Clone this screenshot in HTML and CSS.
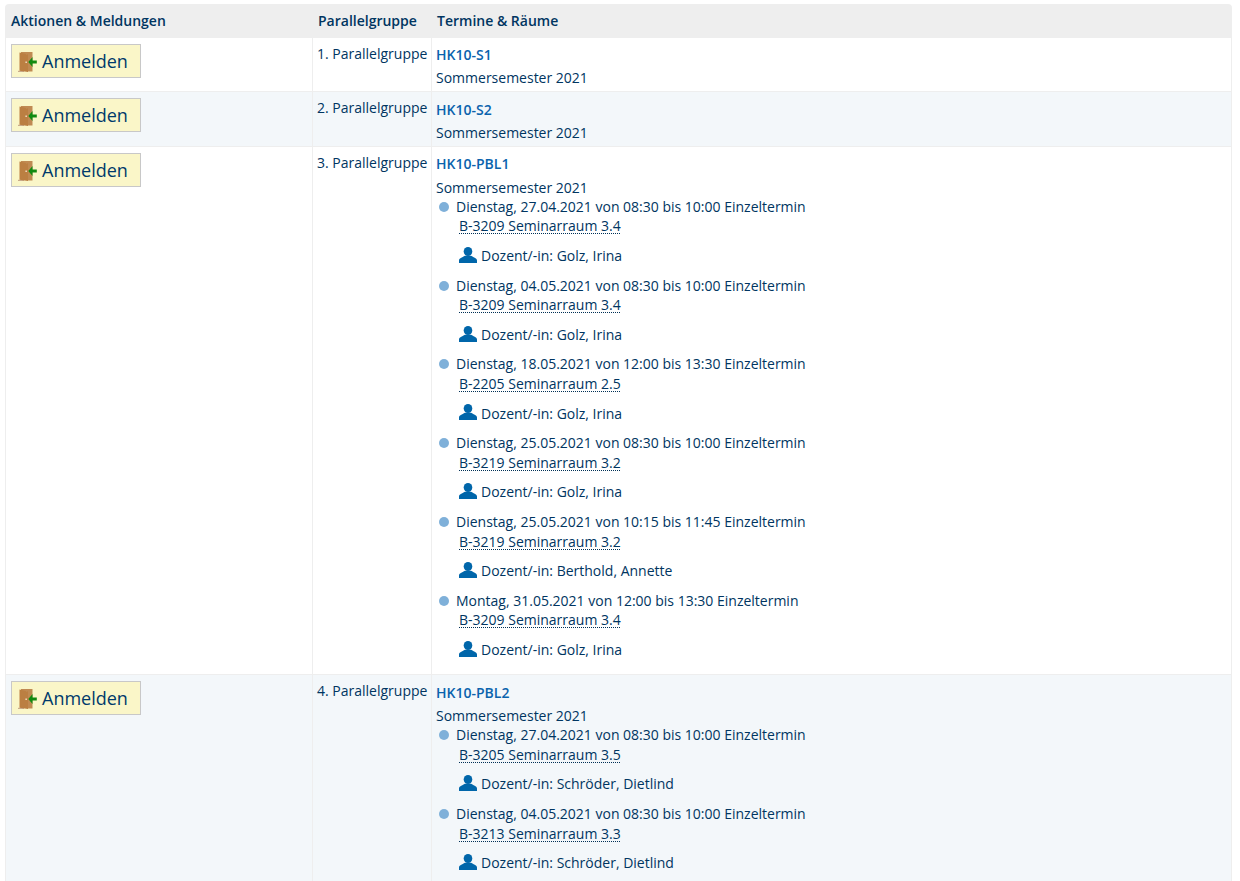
FILE: index.html
```html
<!DOCTYPE html>
<html lang="de">
<head>
<meta charset="utf-8">
<title>Parallelgruppen</title>
<link rel="stylesheet" href="styles.css">
</head>
<body>
<svg class="defs" width="0" height="0" aria-hidden="true">
  <symbol id="door" viewBox="0 0 20 20">
    <path d="M0 18.800h6V20H0z" fill="#c9ab8c"/>
    <path d="M3 0h11.500v19.500H9V2.500H3z" fill="#c08a52"/>
    <path d="M1.500 .5 10 2.500V20L1.500 18.800z" fill="#bb7f42"/>
    <rect x="7.500" y="9.500" width="1.300" height="1.500" fill="#f6ecd4"/>
    <path d="M18.800 8.500h-4.300V5l-4.200 5 4.200 5v-3.500h4.300z" fill="#118a11"/>
  </symbol>
  <symbol id="person" viewBox="0 0 18 16">
    <ellipse cx="9" cy="4.500" rx="4.300" ry="4.500" fill="#0066aa"/>
    <path d="M0 16v-2.500C0 11.500 3 10.500 6 8.800h6c3 1.700 6 2.700 6 4.700V16z" fill="#0066aa"/>
  </symbol>
</svg>
<main class="page">
<table class="groups">
  <thead>
    <tr><th class="c-act">Aktionen &amp; Meldungen</th><th class="c-par">Parallelgruppe</th><th>Termine &amp; Räume</th></tr>
  </thead>
  <tbody>
    <tr>
      <td><a class="signup"><svg class="ic-door"><use href="#door"/></svg>Anmelden</a></td>
      <td class="par">1. Parallelgruppe</td>
      <td class="dates"><a class="code">HK10-S1</a><div class="sem">Sommersemester 2021</div></td>
    </tr>
    <tr class="alt">
      <td><a class="signup"><svg class="ic-door"><use href="#door"/></svg>Anmelden</a></td>
      <td class="par">2. Parallelgruppe</td>
      <td class="dates"><a class="code">HK10-S2</a><div class="sem">Sommersemester 2021</div></td>
    </tr>
    <tr>
      <td><a class="signup"><svg class="ic-door"><use href="#door"/></svg>Anmelden</a></td>
      <td class="par">3. Parallelgruppe</td>
      <td class="dates"><a class="code">HK10-PBL1</a><div class="sem">Sommersemester 2021</div>
        <ul class="terms">
          <li><div class="when">Dienstag, 27.04.2021 von 08:30 bis 10:00 Einzeltermin</div><div class="room"><span>B-3209 Seminarraum 3.4</span></div><div class="lect"><svg class="ic-person"><use href="#person"/></svg>Dozent/-in: Golz, Irina</div></li>
          <li><div class="when">Dienstag, 04.05.2021 von 08:30 bis 10:00 Einzeltermin</div><div class="room"><span>B-3209 Seminarraum 3.4</span></div><div class="lect"><svg class="ic-person"><use href="#person"/></svg>Dozent/-in: Golz, Irina</div></li>
          <li><div class="when">Dienstag, 18.05.2021 von 12:00 bis 13:30 Einzeltermin</div><div class="room"><span>B-2205 Seminarraum 2.5</span></div><div class="lect"><svg class="ic-person"><use href="#person"/></svg>Dozent/-in: Golz, Irina</div></li>
          <li><div class="when">Dienstag, 25.05.2021 von 08:30 bis 10:00 Einzeltermin</div><div class="room"><span>B-3219 Seminarraum 3.2</span></div><div class="lect"><svg class="ic-person"><use href="#person"/></svg>Dozent/-in: Golz, Irina</div></li>
          <li><div class="when">Dienstag, 25.05.2021 von 10:15 bis 11:45 Einzeltermin</div><div class="room"><span>B-3219 Seminarraum 3.2</span></div><div class="lect"><svg class="ic-person"><use href="#person"/></svg>Dozent/-in: Berthold, Annette</div></li>
          <li><div class="when">Montag, 31.05.2021 von 12:00 bis 13:30 Einzeltermin</div><div class="room"><span>B-3209 Seminarraum 3.4</span></div><div class="lect"><svg class="ic-person"><use href="#person"/></svg>Dozent/-in: Golz, Irina</div></li>
        </ul>
      </td>
    </tr>
    <tr class="alt">
      <td><a class="signup"><svg class="ic-door"><use href="#door"/></svg>Anmelden</a></td>
      <td class="par">4. Parallelgruppe</td>
      <td class="dates"><a class="code">HK10-PBL2</a><div class="sem">Sommersemester 2021</div>
        <ul class="terms">
          <li><div class="when">Dienstag, 27.04.2021 von 08:30 bis 10:00 Einzeltermin</div><div class="room"><span>B-3205 Seminarraum 3.5</span></div><div class="lect"><svg class="ic-person"><use href="#person"/></svg>Dozent/-in: Schröder, Dietlind</div></li>
          <li><div class="when">Dienstag, 04.05.2021 von 08:30 bis 10:00 Einzeltermin</div><div class="room"><span>B-3213 Seminarraum 3.3</span></div><div class="lect"><svg class="ic-person"><use href="#person"/></svg>Dozent/-in: Schröder, Dietlind</div></li>
        </ul>
      </td>
    </tr>
  </tbody>
</table>
</main>
</body>
</html>
```
FILE: styles.css
```css
html, body { margin: 0; padding: 0; height: 881px; overflow: hidden; background: #fff; }
body { font-family: "Open Sans", sans-serif; font-size: 14px; line-height: 19.6px; color: #003561; }
.defs { position: absolute; }
.page { padding: 4px 8px 0 5px; }
.groups { width: 1227px; border-collapse: separate; border-spacing: 0; table-layout: fixed; }
.groups th { background: #eeeeee; height: 34px; padding: 0 5px 0 5px; text-align: left; font-weight: 600; vertical-align: middle; box-sizing: border-box; }
.groups th:last-child { border-top-right-radius: 4px; }
.groups th:first-child { border-top-left-radius: 4px; padding-left: 6px; }
.c-act { width: 308px; }
.c-par { width: 119px; }
.groups td { vertical-align: top; padding: 5px 4px 4px 4px; border-right: 1px solid #eeeeee; border-bottom: 1px solid #eeeeee; background: #fff; }
.groups td:first-child { border-left: 1px solid #eeeeee; padding-left: 5px; }
.groups .alt td { background: #f3f7fa; padding-bottom: 4.5px; }
.signup { display: flex; align-items: center; box-sizing: border-box; width: 130px; height: 34px; background: #faf6c8; border: 1px solid #c8c8c8; padding: 0 0 0 6px; font-size: 18px; line-height: 20px; color: #003a6b; margin-top: 1px; }
.ic-door { width: 20px; height: 20px; margin: 2px 4px 0 0; }
.par { white-space: nowrap; padding-top: 6px !important; }
.code { color: #0a63ad; font-weight: 600; display: block; padding-top: 2.15px; height: 20.85px; }
.sem { padding-top: 2.3px; margin-bottom: -0.5px; }
.alt .code { padding-top: 2.6px; height: 20.4px; }
.alt .sem { padding-top: 2.6px; margin-bottom: -0.8px; }
.terms { list-style: none; margin: 0.1px 0 0.6px; padding: 0 0 0 3px; }
.alt .terms { margin-top: 0.8px; }
.terms li { position: relative; padding-left: 17px; height: 78.8px; }
.terms li::before { content: ""; position: absolute; left: 0; top: 5px; width: 10px; height: 10px; border-radius: 50%; background: #7fb0d9; }
.room { padding-left: 3px; height: 19.6px; }
.room span { text-decoration: underline dotted #003056 1px; text-underline-offset: 2px; text-decoration-skip-ink: none; }
.lect { display: flex; align-items: center; margin-top: 10px; padding-left: 3px; }
.ic-person { width: 18px; height: 16px; margin: 0 4px 2px 0; }
```
